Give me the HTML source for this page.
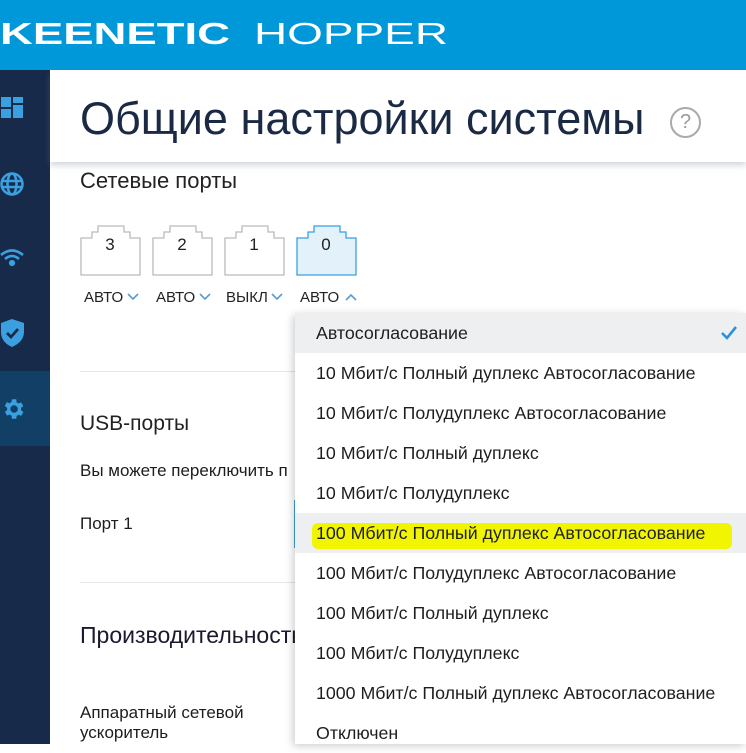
<!DOCTYPE html>
<html><head><meta charset="utf-8"><style>
*{margin:0;padding:0;box-sizing:border-box}
body{width:746px;height:744px;overflow:hidden;background:#fff;font-family:"Liberation Sans","DejaVu Sans",sans-serif;position:relative;color:#1d1d1d}
.hdr{position:absolute;left:0;top:0;width:746px;height:70px;background:#0098d8}
.side{position:absolute;left:0;top:70px;width:50px;height:674px;background:#172a49}
.act{position:absolute;left:0;top:301px;width:50px;height:75px;background:#123f66}
.card{position:absolute;left:50px;top:70px;width:696px;height:92px;background:#fff;box-shadow:0 3px 6px rgba(120,130,160,.35)}
.title{position:absolute;left:80px;top:93px;font-size:45px;color:#1a2944;white-space:nowrap}
.help{position:absolute;left:670px;top:107px;width:31px;height:31px;border:2px solid #aaa;border-radius:50%;color:#999;font-size:20px;text-align:center;line-height:27px}
.t{position:absolute;white-space:nowrap}
.lbl{position:absolute;top:289px;font-size:15px;color:#222}
.hr{position:absolute;left:80px;height:1px;background:#e6e6e6;width:215px}
.dd{position:absolute;left:295px;top:313px;width:451px;height:431px;background:#fff;box-shadow:-2px 2px 8px rgba(0,0,0,.2)}
.row{height:40px;line-height:40px;padding-left:21px;font-size:17.8px;color:#1e1e1e;position:relative;white-space:nowrap}
.g{background:#eeeff1}
</style></head><body>
<div class="hdr"><svg width="746" height="70" style="position:absolute;left:0;top:0"><text x="0" y="44" font-family="Liberation Sans" font-weight="bold" font-size="31" fill="#fff" textLength="230" lengthAdjust="spacingAndGlyphs">KEENETIC</text><text x="254" y="44" font-family="Liberation Sans" font-size="31" fill="#fff" textLength="194" lengthAdjust="spacingAndGlyphs">HOPPER</text></svg></div>
<div class="side">
<div class="act"></div>
<svg style="position:absolute;left:0;top:26px" width="26" height="26" viewBox="0 0 26 26" fill="#3aa0e0"><rect x="1" y="1" width="10" height="10"/><rect x="13" y="1" width="10" height="6"/><rect x="1" y="13" width="10" height="9"/><rect x="13" y="9" width="10" height="13"/></svg>
<svg style="position:absolute;left:0;top:102px" width="26" height="26" viewBox="0 0 26 26" fill="none" stroke="#3aa0e0" stroke-width="2.5"><circle cx="12" cy="12" r="10.5"/><ellipse cx="12" cy="12" rx="4.5" ry="10.5"/><line x1="1" y1="9" x2="23" y2="9"/><line x1="1" y1="15" x2="23" y2="15"/></svg>
<svg style="position:absolute;left:0;top:176px" width="26" height="24" viewBox="0 0 26 24" fill="none" stroke="#3aa0e0" stroke-width="2.6"><path d="M1 9 Q12 0 23 9"/><path d="M5 13 Q12 7 19 13"/><circle cx="12" cy="17" r="1.8" fill="#3aa0e0"/></svg>
<svg style="position:absolute;left:0;top:248px" width="26" height="30" viewBox="0 0 26 30"><path d="M12 1 L24 5 V14 C24 21 19 26 12 29 C5 26 1 21 1 14 V5 Z" fill="#3aa0e0"/><path d="M7 15 L11 19 L18 11" stroke="#172a49" stroke-width="2.8" fill="none"/></svg>
<svg style="position:absolute;left:0;top:326px" width="26" height="26" viewBox="0 0 24 24" fill="#3aa0e0"><path d="M19.4 13a7.5 7.5 0 000-2l2.1-1.6-2-3.5-2.5 1a7 7 0 00-1.7-1L15 3h-4l-.4 2.7a7 7 0 00-1.7 1l-2.5-1-2 3.5L6.6 11a7.5 7.5 0 000 2l-2.1 1.6 2 3.5 2.5-1a7 7 0 001.7 1L11 21h4l.4-2.7a7 7 0 001.7-1l2.5 1 2-3.5zM13 15.5a3.5 3.5 0 110-7 3.5 3.5 0 010 7z"/></svg>
</div>
<div class="card"></div>
<div class="title">Общие настройки системы</div>
<div class="help">?</div>
<div class="t" style="left:80px;top:168px;font-size:22px;color:#222">Сетевые порты</div>
<svg style="position:absolute;left:78px;top:222px" width="290" height="56" viewBox="0 0 290 56">
<g fill="#fff" stroke="#bbb" stroke-width="1.3">
<path d="M3 16 H14 V10 H20 V4 H46 V10 H52 V16 H62 V53 H3 Z"/>
<path d="M75 16 H86 V10 H92 V4 H118 V10 H124 V16 H134 V53 H75 Z"/>
<path d="M147 16 H158 V10 H164 V4 H190 V10 H196 V16 H206 V53 H147 Z"/>
</g>
<path d="M219 16 H230 V10 H236 V4 H262 V10 H268 V16 H278 V53 H219 Z" fill="#e3f1fb" stroke="#3aa0e0" stroke-width="1.3"/>
<g font-family="Liberation Sans" font-size="17" fill="#222" text-anchor="middle"><text x="32" y="28">3</text><text x="104" y="28">2</text><text x="176" y="28">1</text><text x="248" y="28">0</text></g>
</svg>
<div class="lbl" style="left:84px">АВТО</div><div class="lbl" style="left:156px">АВТО</div><div class="lbl" style="left:226px">ВЫКЛ</div><div class="lbl" style="left:300px">АВТО</div>
<svg style="position:absolute;left:126px;top:291px" width="240" height="12" viewBox="0 0 240 12" fill="none" stroke="#5a9bd0" stroke-width="1.6"><path d="M2 3 L7 8 L12 3"/><path d="M74 3 L79 8 L84 3"/><path d="M146 3 L151 8 L156 3"/><path d="M220 9 L225 4 L230 9"/></svg>
<div class="hr" style="top:371px"></div>
<div class="t" style="left:80px;top:412px;font-size:21px;color:#222">USB-порты</div>
<div class="t" style="left:80px;top:461px;font-size:17px">Вы можете переключить п</div>
<div class="t" style="left:80px;top:514px;font-size:17px">Порт 1</div>
<div style="position:absolute;left:294px;top:500px;width:2px;height:48px;background:#3aa0e0"></div>
<div class="hr" style="top:582px"></div>
<div class="t" style="left:80px;top:622px;font-size:23px;color:#1a1a2e">Производительность</div>
<div class="t" style="left:80px;top:703px;font-size:17px;line-height:20px">Аппаратный сетевой<br>ускоритель</div>
<div class="dd">
<div class="row g">Автосогласование<svg style="position:absolute;right:8px;top:12px" width="18" height="16" viewBox="0 0 18 16" fill="none" stroke="#2f8fd8" stroke-width="2.6"><path d="M2 8 L7 13 L16 2"/></svg></div>
<div class="row">10 Мбит/с Полный дуплекс Автосогласование</div>
<div class="row">10 Мбит/с Полудуплекс Автосогласование</div>
<div class="row">10 Мбит/с Полный дуплекс</div>
<div class="row">10 Мбит/с Полудуплекс</div>
<div class="row g"><div style="position:absolute;left:17px;top:10px;width:420px;height:26px;background:#f1f500;border-radius:6px"></div><span style="position:relative">100 Мбит/с Полный дуплекс Автосогласование</span></div>
<div class="row">100 Мбит/с Полудуплекс Автосогласование</div>
<div class="row">100 Мбит/с Полный дуплекс</div>
<div class="row">100 Мбит/с Полудуплекс</div>
<div class="row">1000 Мбит/с Полный дуплекс Автосогласование</div>
<div class="row">Отключен</div>
</div>
</body></html>
